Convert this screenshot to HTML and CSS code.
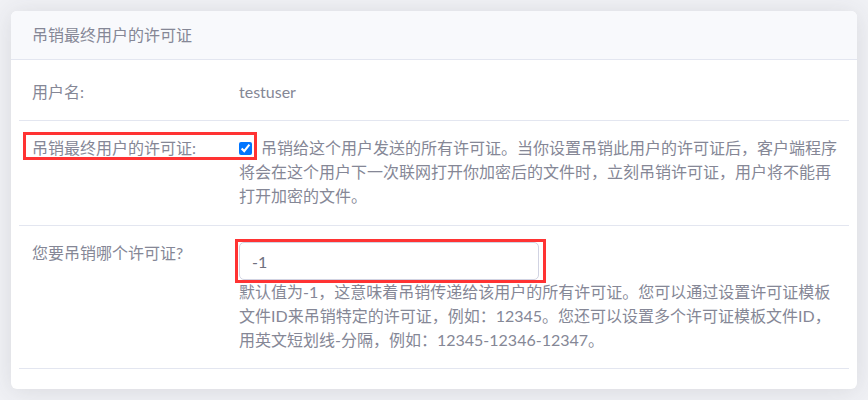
FILE: index.html
```html
<!DOCTYPE html>
<html lang="zh-CN">
<head>
<meta charset="utf-8">
<title>吊销最终用户的许可证</title>
<link rel="stylesheet" href="styles.css">
</head>
<body>
<div class="card">
  <div class="card-header">吊销最终用户的许可证</div>
  <div class="card-body">
    <div class="row row-user">
      <div class="label">用户名:</div>
      <div class="value">testuser</div>
    </div>
    <div class="row row-revoke">
      <div class="label">吊销最终用户的许可证:</div>
      <div class="value"><input class="check" type="checkbox" checked>吊销给这个用户发送的所有许可证。当你设置吊销此用户的许可证后，客户端程序<br>将会在这个用户下一次联网打开你加密后的文件时，立刻吊销许可证，用户将不能再<br>打开加密的文件。</div>
      <div class="mark mark-label"></div>
    </div>
    <div class="row row-which">
      <div class="label">您要吊销哪个许可证?</div>
      <div class="value">
        <input class="text-input" type="text" value="-1">
        <div class="help">默认值为-1，这意味着吊销传递给该用户的所有许可证。您可以通过设置许可证模板<br>文件ID来吊销特定的许可证，例如：12345。您还可以设置多个许可证模板文件ID，<br>用英文短划线-分隔，例如：12345-12346-12347。</div>
      </div>
      <div class="mark mark-input"></div>
    </div>
  </div>
</div>
</body>
</html>
```
FILE: styles.css
```css
html, body {
  margin: 0;
  padding: 0;
}
body {
  background: #f0f1f5;
  padding: 11px;
  font-family: "Lato", "Noto Sans CJK SC", sans-serif;
  font-size: 16px;
  line-height: 24px;
  color: #858796;
}
.card {
  width: 846px;
  height: 378px;
  background: #fff;
  border-radius: 6px;
  box-shadow: 0 2px 24px 0 rgba(58, 59, 69, 0.12);
  box-sizing: border-box;
}
.card-header {
  height: 49px;
  box-sizing: border-box;
  padding: 0 21px;
  display: flex;
  align-items: center;
  background: #f8f9fc;
  border-bottom: 1px solid #e3e6f0;
  border-radius: 6px 6px 0 0;
}
.card-body {
  padding: 0 8px 20px;
}
.row {
  position: relative;
  display: flex;
  border-bottom: 1px solid #e3e6f0;
  padding: 16px 13px;
}
.row-user {
  padding-top: 20px;
}
.row-revoke {
  padding-top: 15px;
  padding-bottom: 17px;
}
.label {
  width: 207px;
  flex: none;
}
.row-which .label {
  margin-top: -1px;
}
.value {
  flex: 1;
  white-space: nowrap;
}
.check {
  width: 13px;
  height: 13px;
  margin: 0 9px 0 0;
  vertical-align: -1px;
}
.text-input {
  display: block;
  width: 300px;
  height: 38px;
  box-sizing: border-box;
  margin: 0;
  padding: 0 12px;
  border: 1px solid #d1d3e2;
  border-radius: 5px;
  font-family: "Lato", "Noto Sans CJK SC", sans-serif;
  font-size: 16px;
  color: #6e707e;
  background: #fff;
  outline: none;
}
.help {
  margin-top: 0;
}
.mark {
  position: absolute;
  border: 3px solid #f33;
  box-sizing: border-box;
  pointer-events: none;
}
.mark-label {
  left: 4px;
  top: 11px;
  width: 234px;
  height: 28px;
}
.mark-input {
  left: 216px;
  top: 13px;
  width: 311px;
  height: 44px;
}
```
